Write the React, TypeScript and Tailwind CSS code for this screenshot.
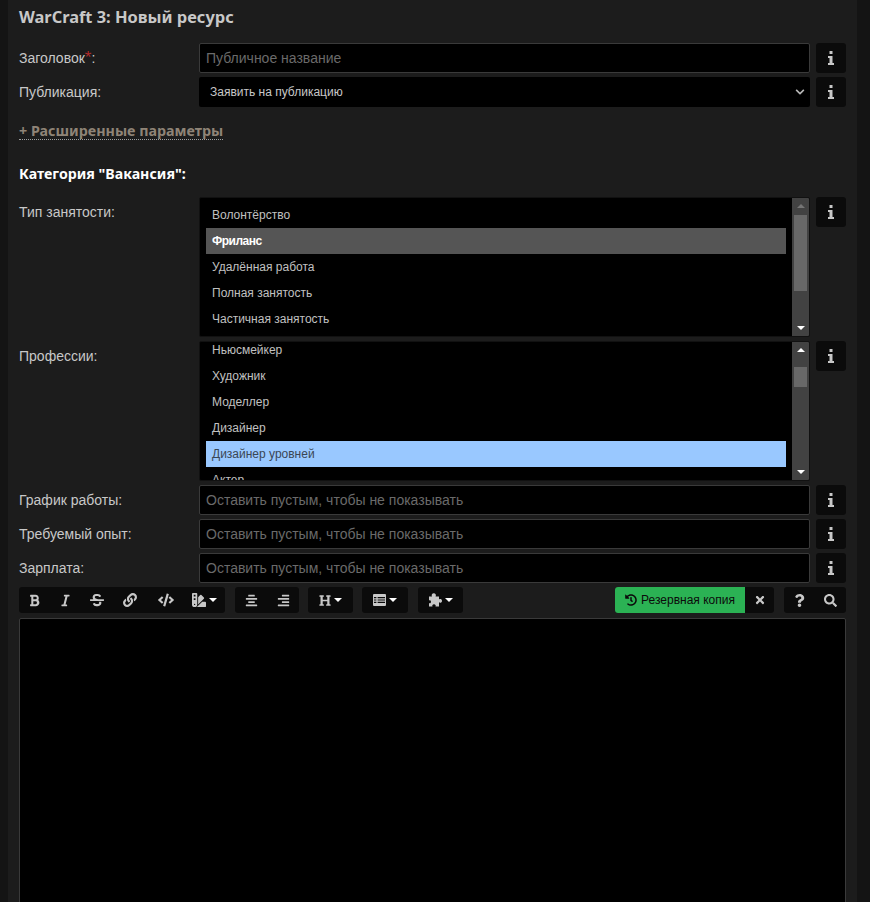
import React from "react";
import {
  FaBold, FaItalic, FaStrikethrough, FaLink, FaCode, FaSwatchbook, FaAlignCenter, FaAlignRight,
  FaHeading, FaHistory, FaTimes, FaQuestion, FaSearch, FaChevronDown,
} from "react-icons/fa";

function InfoButton() {
  return (
    <div className="w-[30px] h-[30px] shrink-0 rounded-[3px] bg-[#0b0b0b] flex items-center justify-center text-[#c8c8c8]">
      <svg width="6" height="14" viewBox="0 0 6 14" fill="currentColor">
        <rect x="1.5" y="0" width="3" height="3" />
        <path d="M0 5h4.5v7H6v2H0v-2h1.5V7H0z" />
      </svg>
    </div>
  );
}

function Field({ label, placeholder }: { label: string; placeholder: string }) {
  return (
    <div className="flex h-[30px] mb-[4px]">
      <div className="w-[180px] shrink-0 text-[14px] leading-[30px] text-[#c8c8c8]">{label}</div>
      <div className="w-[611px] h-[30px] shrink-0 bg-black border border-[#3a3a3a] rounded-[2px] px-[6px] text-[14px] leading-[28px] text-[#6a6a6a]">
        {placeholder}
      </div>
      <div className="ml-[6px]"><InfoButton /></div>
    </div>
  );
}

function Caret() {
  return <span className="ml-[3px] w-0 h-0 border-x-[4px] border-x-transparent border-t-[4px] border-t-white" />;
}

function Scrollbar({ top, height, upDim }: { top: string; height: string; upDim?: boolean }) {
  return (
    <div className="w-[17px] shrink-0 bg-[#424242] flex flex-col items-center justify-between py-[6px]">
      <span className={"w-0 h-0 border-x-[4px] border-x-transparent border-b-[4px] " + (upDim ? "border-b-[#757575]" : "border-b-white")} />
      <span className="w-0 h-0 border-x-[4px] border-x-transparent border-t-[4px] border-t-white" />
      <div className={"absolute right-[2px] w-[13px] bg-[#686868] " + top + " " + height} />
    </div>
  );
}

const Opt = ({ text, cls = "text-[#c0c0c0]" }: { text: string; cls?: string }) => (
  <div className={"h-[26px] leading-[26px] px-[6px] text-[12px] " + cls}>{text}</div>
);

function TableIcon() {
  return (
    <svg width="13" height="12" viewBox="0 0 13 12" className="text-[#c8c8c8]" fill="currentColor">
      <path fillRule="evenodd" d="M1 0h11a1 1 0 0 1 1 1v10a1 1 0 0 1-1 1H1a1 1 0 0 1-1-1V1a1 1 0 0 1 1-1zM1 3v1.2h2.4V3zm3.6 0v1.2H12V3zM1 5.4v1.2h2.4V5.4zm3.6 0v1.2H12V5.4zM1 7.8V9h2.4V7.8zm3.6 0V9H12V7.8z" />
    </svg>
  );
}

function PuzzleIcon() {
  return (
    <svg width="14" height="14" viewBox="0 0 14 14" className="text-[#c8c8c8]" fill="currentColor">
      <path d="M1 3.5h3c-.9-1.6.2-3.2 1.8-3.2S8.500 1.900 7.600 3.500H11v3c1.100-.8 3-.4 3 1.400s-1.900 2.200-3 1.400V13.500H7.500c.6-1.100-.1-2.200-1.500-2.200s-2.100 1.100-1.500 2.200H1V10c1 .6 2 0 2-1.300S2 6.800 1 7.400z" />
    </svg>
  );
}

export default function App() {
  return (
    <div className="h-[902px] overflow-hidden bg-[#141414] pl-[8px] pr-[13px] font-['Liberation_Sans',Arial,sans-serif]">
      <div className="h-full bg-[#1c1c1c] pl-[11px] pr-[11px]">
        <h1 className="h-[43px] pt-[7px] text-[16.4px] leading-[20px] font-bold text-[#c8c8c8] font-['Noto_Sans',Verdana,sans-serif]">
          WarCraft 3: Новый ресурс
        </h1>

        <div className="flex h-[30px] mb-[4px]">
          <div className="w-[180px] shrink-0 text-[14px] leading-[30px] text-[#c8c8c8]">
            Заголовок<span className="text-[#b02a2a] text-[17px] leading-[0]">*</span>:
          </div>
          <div className="w-[611px] h-[30px] shrink-0 bg-black border border-[#3a3a3a] rounded-[2px] px-[6px] text-[14px] leading-[28px] text-[#6a6a6a]">
            Публичное название
          </div>
          <div className="ml-[6px]"><InfoButton /></div>
        </div>

        <div className="flex h-[30px]">
          <div className="w-[180px] shrink-0 text-[14px] leading-[30px] text-[#c8c8c8]">Публикация:</div>
          <div className="w-[611px] h-[30px] shrink-0 bg-black rounded-[2px] pl-[11px] pr-[5px] flex items-center justify-between text-[12px] text-[#c8c8c8]">
            <span>Заявить на публикацию</span>
            <FaChevronDown className="w-[10px] h-[10px] text-[#b8b8b8]" />
          </div>
          <div className="ml-[6px]"><InfoButton /></div>
        </div>

        <div className="mt-[15px] h-[18px] flex">
          <span className="h-[18px] leading-[18px] text-[14.3px] font-bold text-[#8f8477] border-b border-dotted border-[#a0a0a0] font-['Noto_Sans',Verdana,sans-serif]">
            + Расширенные параметры
          </span>
        </div>

        <div className="mt-[25px] h-[18px] text-[14.2px] leading-[18px] font-bold text-white font-['Noto_Sans',Verdana,sans-serif]">
          Категория "Вакансия":
        </div>

        <div className="flex mt-[14px] h-[140px]">
          <div className="w-[180px] shrink-0 text-[14px] leading-[30px] text-[#c8c8c8]">Тип занятости:</div>
          <div className="relative w-[611px] shrink-0 h-full bg-black border border-[#111111] rounded-[2px] flex overflow-hidden">
            <div className="flex-1 pt-[4px] pl-[6px] pr-[6px]">
              <Opt text="Волонтёрство" />
              <Opt text="Фриланс" cls="bg-[#555555] text-white font-bold tracking-[-0.5px]" />
              <Opt text="Удалённая работа" />
              <Opt text="Полная занятость" />
              <Opt text="Частичная занятость" />
            </div>
            <Scrollbar upDim top="top-[17px]" height="h-[76px]" />
          </div>
          <div className="ml-[6px]"><InfoButton /></div>
        </div>

        <div className="flex mt-[4px] h-[140px]">
          <div className="w-[180px] shrink-0 text-[14px] leading-[30px] text-[#c8c8c8]">Профессии:</div>
          <div className="relative w-[611px] shrink-0 h-full bg-black border border-[#111111] rounded-[2px] flex overflow-hidden">
            <div className="flex-1 -mt-[5px] pl-[6px] pr-[6px]">
              <Opt text="Ньюсмейкер" />
              <Opt text="Художник" />
              <Opt text="Моделлер" />
              <Opt text="Дизайнер" />
              <Opt text="Дизайнер уровней" cls="bg-[#99c8ff] text-[#3a4654]" />
              <Opt text="Актер" />
            </div>
            <Scrollbar top="top-[25px]" height="h-[20px]" />
          </div>
          <div className="ml-[6px]"><InfoButton /></div>
        </div>

        <div className="mt-[4px]">
          <Field label="График работы:" placeholder="Оставить пустым, чтобы не показывать" />
          <Field label="Требуемый опыт:" placeholder="Оставить пустым, чтобы не показывать" />
          <Field label="Зарплата:" placeholder="Оставить пустым, чтобы не показывать" />
        </div>

        <div className="flex h-[26px] text-[#c8c8c8]">
          <div className="flex items-center h-full bg-[#0b0b0b] rounded-[3px] w-[206px]">
            <span className="w-[31px] flex justify-center"><FaBold className="w-[13px] h-[13px]" /></span>
            <span className="w-[31px] flex justify-center"><FaItalic className="w-[13px] h-[13px]" /></span>
            <span className="w-[31px] flex justify-center"><FaStrikethrough className="w-[14px] h-[14px]" /></span>
            <span className="w-[36px] flex justify-center"><FaLink className="w-[14px] h-[14px]" /></span>
            <span className="w-[36px] flex justify-center"><FaCode className="w-[16px] h-[16px]" /></span>
            <span className="w-[41px] flex items-center justify-center"><FaSwatchbook className="w-[14px] h-[14px]" /><Caret /></span>
          </div>
          <div className="ml-[10px] flex items-center h-full bg-[#0b0b0b] rounded-[3px] w-[64px]">
            <span className="w-[32px] flex justify-center"><FaAlignCenter className="w-[13px] h-[13px]" /></span>
            <span className="w-[32px] flex justify-center"><FaAlignRight className="w-[13px] h-[13px]" /></span>
          </div>
          <div className="ml-[9px] flex items-center justify-center h-full bg-[#0b0b0b] rounded-[3px] w-[45px]">
            <FaHeading className="w-[12px] h-[13px]" /><Caret />
          </div>
          <div className="ml-[9px] flex items-center justify-center h-full bg-[#0b0b0b] rounded-[3px] w-[46px]">
            <TableIcon /><Caret />
          </div>
          <div className="ml-[10px] flex items-center justify-center h-full bg-[#0b0b0b] rounded-[3px] w-[45px]">
            <PuzzleIcon /><Caret />
          </div>
          <div className="ml-[152px] flex h-full rounded-[3px] overflow-hidden w-[159px] bg-[#0b0b0b]">
            <div className="w-[130px] bg-[#2bb254] flex items-center justify-center gap-[4px] text-[12px] text-[#0b0b0b]">
              <FaHistory className="w-[12px] h-[12px]" />
              <span>Резервная копия</span>
            </div>
            <div className="flex-1 flex items-center justify-center"><FaTimes className="w-[12px] h-[12px]" /></div>
          </div>
          <div className="ml-[10px] flex items-center h-full bg-[#0b0b0b] rounded-[3px] w-[62px]">
            <span className="w-[31px] flex justify-center"><FaQuestion className="w-[13px] h-[13px]" /></span>
            <span className="w-[31px] flex justify-center"><FaSearch className="w-[13px] h-[13px]" /></span>
          </div>
        </div>

        <div className="mt-[5px] h-[400px] w-[827px] bg-black border border-[#3a3a3a] rounded-[2px]" />
      </div>
    </div>
  );
}
